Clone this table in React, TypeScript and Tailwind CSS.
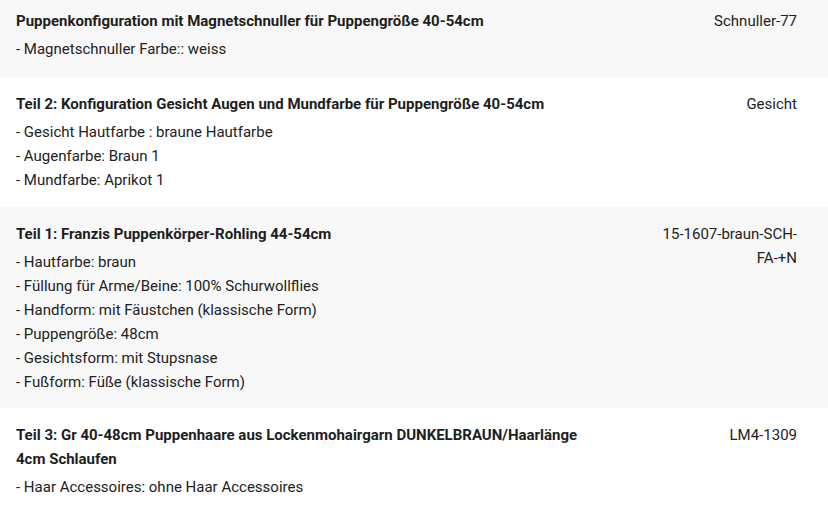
const rows = [
  {
    title: "Puppenkonfiguration mit Magnetschnuller für Puppengröße 40-54cm",
    items: ["- Magnetschnuller Farbe:: weiss"],
    sku: "Schnuller-77",
    grey: true,
    first: true,
  },
  {
    title: "Teil 2: Konfiguration Gesicht Augen und Mundfarbe für Puppengröße 40-54cm",
    items: ["- Gesicht Hautfarbe : braune Hautfarbe", "- Augenfarbe: Braun 1", "- Mundfarbe: Aprikot 1"],
    sku: "Gesicht",
    grey: false,
  },
  {
    title: "Teil 1: Franzis Puppenkörper-Rohling 44-54cm",
    items: [
      "- Hautfarbe: braun",
      "- Füllung für Arme/Beine: 100% Schurwollflies",
      "- Handform: mit Fäustchen (klassische Form)",
      "- Puppengröße: 48cm",
      "- Gesichtsform: mit Stupsnase",
      "- Fußform: Füße (klassische Form)",
    ],
    sku: "15-1607-braun-SCH-FA-+N",
    grey: true,
  },
  {
    title: "Teil 3: Gr 40-48cm Puppenhaare aus Lockenmohairgarn DUNKELBRAUN/Haarlänge 4cm Schlaufen",
    items: ["- Haar Accessoires: ohne Haar Accessoires"],
    sku: "LM4-1309",
    grey: false,
  },
];

export default function App() {
  return (
    <div className="min-h-screen bg-white font-['Roboto',sans-serif] text-[15px] leading-6 text-[#222]">
      {rows.map((row) => (
        <div
          key={row.sku}
          className={`flex pl-4 pr-[31px] ${row.first ? "pt-[9px] pb-4" : "pt-[15px] pb-[14.5px]"} ${row.grey ? "bg-[#f8f8f8]" : "bg-white"}`}
        >
          <div className="w-[585px]">
            <div className="font-bold text-[#1e1e1e]">{row.title}</div>
            <div className="mt-1">
              {row.items.map((item) => (
                <div key={item}>{item}</div>
              ))}
            </div>
          </div>
          <div className="ml-auto w-[145px] break-words text-right">{row.sku}</div>
        </div>
      ))}
    </div>
  );
}
